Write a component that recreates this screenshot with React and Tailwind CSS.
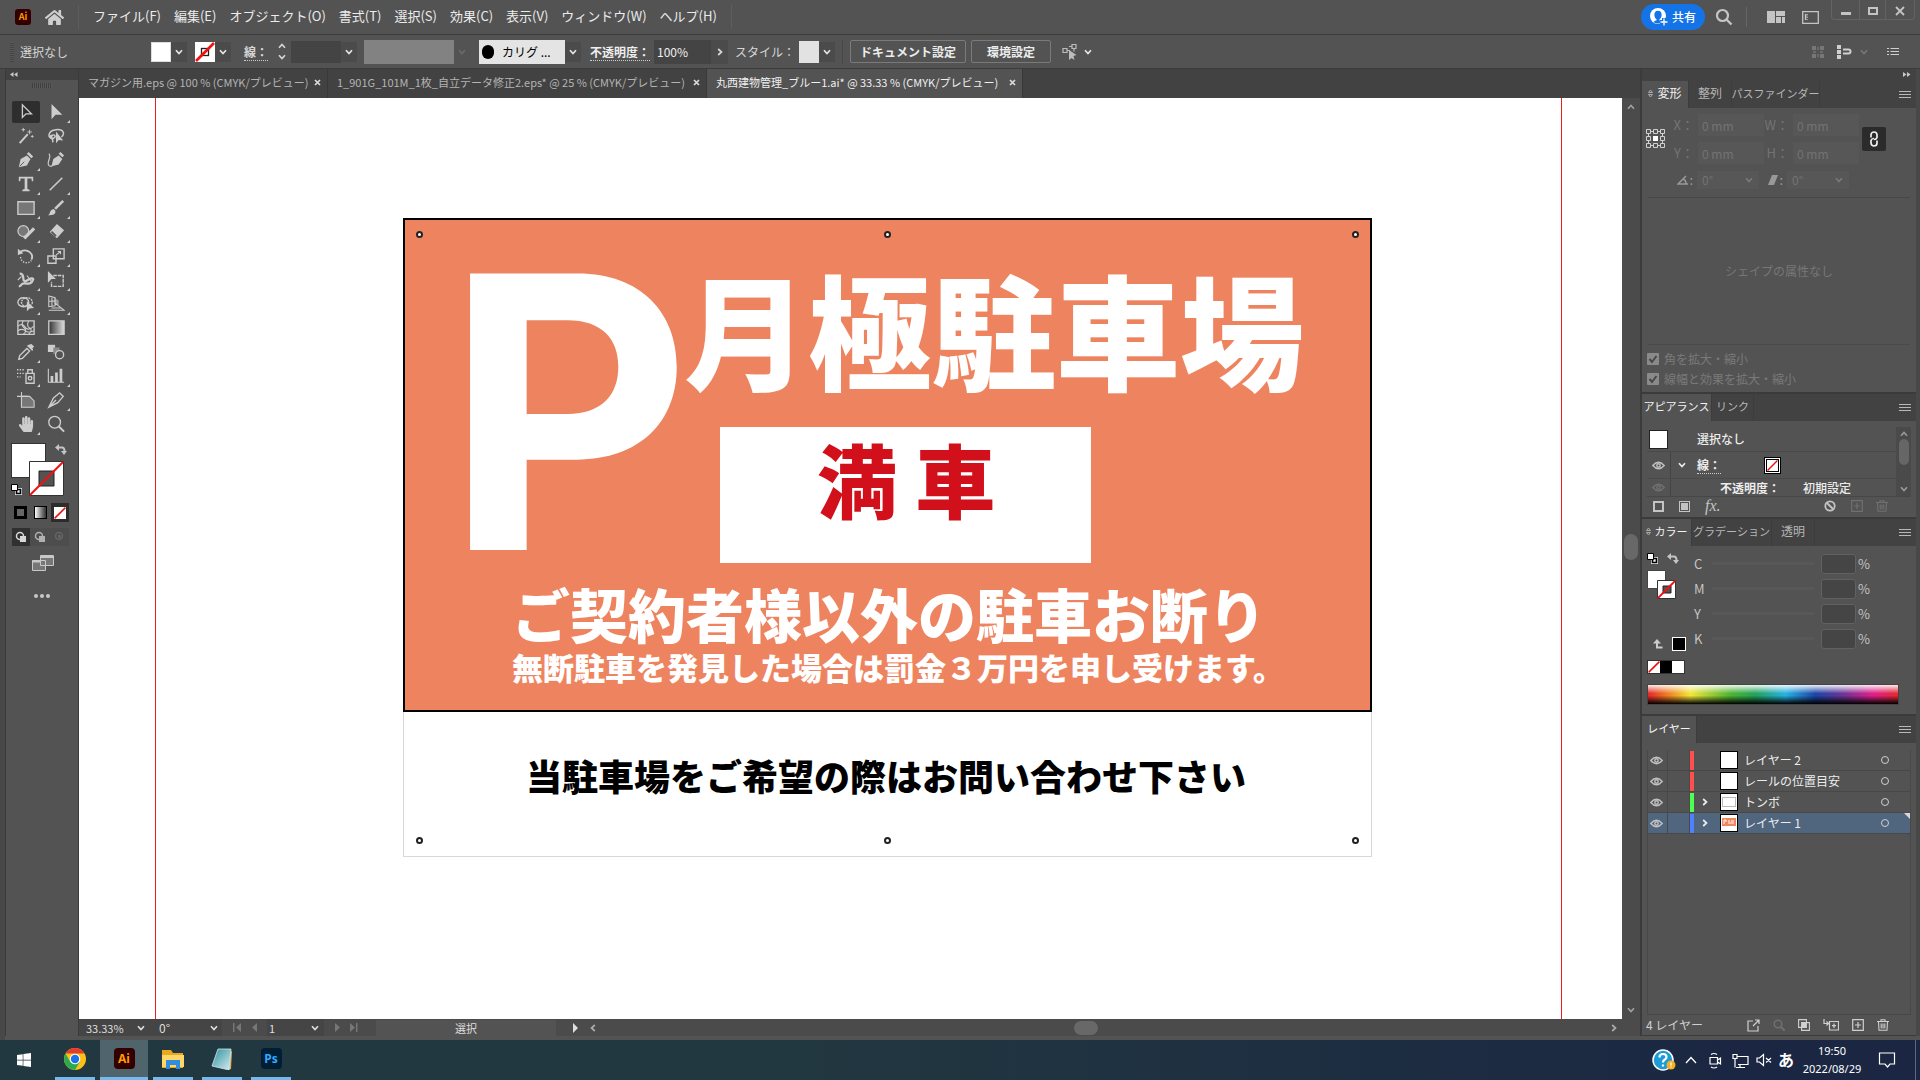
import React from "react";
import { FaHome, FaWindows, FaHandPaper } from "react-icons/fa";

const Icon = ({ size = 20, box = 20, className = "", children }) => (
  <svg
    width={size}
    height={size}
    viewBox={`0 0 ${box} ${box}`}
    className={`shrink-0 ${className}`}
    fill="none"
    stroke="currentColor"
    strokeWidth="1.5"
    aria-hidden="true"
  >
    {children}
  </svg>
);

const Chevron = ({ className = "" }) => (
  <svg width="8" height="6" viewBox="0 0 8 6" fill="none" stroke="currentColor" strokeWidth="1.7" className={`shrink-0 ${className}`} aria-hidden="true">
    <path d="M1 1.2 4 4.5 7 1.2" />
  </svg>
);

const DropButton = ({ label }) => (
  <button aria-label={label} className="flex h-[20px] w-[16px] shrink-0 items-center justify-center bg-[#4b4b4b] text-[#e6e6e6]">
    <Chevron />
  </button>
);

const Hamburger = () => (
  <button aria-label="パネルメニュー" className="mr-[5px] ml-auto flex h-full items-center text-[#b8b8b8]">
    <svg width="12" height="9" viewBox="0 0 12 9" stroke="currentColor" strokeWidth="1" aria-hidden="true">
      <path d="M0 1.5h12M0 4.5h12M0 7.5h12" />
    </svg>
  </button>
);

const menus = ["ファイル(F)", "編集(E)", "オブジェクト(O)", "書式(T)", "選択(S)", "効果(C)", "表示(V)", "ウィンドウ(W)", "ヘルプ(H)"];

function MenuBar() {
  return (
    <header className="flex h-[35px] shrink-0 items-center border-b border-[#3b3b3b] pl-[15px]">
      <span className="flex h-[16px] w-[16px] items-center justify-center rounded-[3px] bg-[#330000] text-[9px] font-bold text-[#ff9a00]">Ai</span>
      <button aria-label="ホーム" className="ml-[14px] text-[#cfcfcf]"><FaHome size={19} /></button>
      <div className="mx-[14px] h-[24px] w-px bg-[#5e5e5e]" />
      <nav className="flex gap-[13px] pb-[2px] text-[13px] text-[#ececec]">
        {menus.map((m) => (
          <button key={m} className="leading-[20px] whitespace-nowrap">{m}</button>
        ))}
      </nav>
      <div className="ml-[14px] h-[24px] w-px bg-[#5e5e5e]" />
      <div className="ml-auto flex h-full items-center text-[#c4c4c4]">
        <button className="flex h-[26px] w-[64px] items-center justify-center gap-[4px] rounded-full bg-[#1473e6] text-[12px] font-medium text-white">
          <svg width="18" height="18" viewBox="0 0 18 18" aria-hidden="true">
            <circle cx="8" cy="8" r="8" fill="#fff" />
            <ellipse cx="8" cy="7" rx="3.6" ry="4.2" fill="#1473e6" />
            <path d="M6.5 10h3v2.6h-3zM3.4 14q4.6-4 9.2 0-4.6 3-9.2 0z" fill="#1473e6" />
            <path d="M14 10v8M10 14h8" stroke="#1473e6" strokeWidth="4" />
            <path d="M14 10.5v7M10.5 14h7" stroke="#fff" strokeWidth="1.3" />
          </svg>
          共有
        </button>
        <button aria-label="検索" className="ml-[10px]">
          <Icon size={18} box={18} className="block"><circle cx="7.5" cy="7.5" r="5.5" strokeWidth="2.2" /><path d="m11.5 11.5 5 5" strokeWidth="2.4" /></Icon>
        </button>
        <div className="ml-[13px] h-[20px] w-px bg-[#666]" />
        <button aria-label="ドキュメントの配置" className="ml-[20px]">
          <svg width="18" height="12" viewBox="0 0 18 12" fill="currentColor" className="block" aria-hidden="true"><path d="M0 0h8v12H0zM9 0h9v5H9zM9 6h5v6H9zM15 6h3v6h-3z" /></svg>
        </button>
        <button aria-label="ワークスペース" className="ml-[17px]">
          <svg width="17" height="13" viewBox="0 0 17 13" fill="none" stroke="currentColor" strokeWidth="1.3" className="block" aria-hidden="true"><path d="M.7.7h15.6v11.6H.7zM3.5 3v6" /><path d="M5 3v6" strokeDasharray="1.5 1" /></svg>
        </button>
        <div className="mr-[5px] ml-[12px] flex h-[20px] self-start rounded-b border border-t-0 border-[#636363]">
          <button aria-label="最小化" className="flex w-[27px] items-center justify-center pt-[8px]"><span className="h-[3px] w-[10px] bg-current" /></button>
          <button aria-label="最大化" className="flex w-[27px] items-center justify-center border-x border-[#636363] pt-[3px]"><span className="h-[8px] w-[10px] border-2 border-current" /></button>
          <button aria-label="閉じる" className="flex w-[28px] items-center justify-center pt-[2px]"><Icon size={10} box={10}><path d="m1 1 8 8M9 1 1 9" strokeWidth="1.8" /></Icon></button>
        </div>
      </div>
    </header>
  );
}

const NoneSwatch = ({ size = 20, inner = true }) => (
  <svg width={size} height={size} viewBox="0 0 20 20" className="shrink-0 bg-white" aria-hidden="true">
    {inner && <rect x="6.5" y="6.5" width="7" height="7" fill="#fff" stroke="#222" strokeWidth="1.3" />}
    <path d="M1 19 19 1" stroke="#f01010" strokeWidth="2.6" />
  </svg>
);

function ControlBar() {
  return (
    <div className="flex h-[34px] shrink-0 items-center overflow-hidden border-b border-[#3b3b3b] pl-[10px] text-[12px] text-[#d6d6d6]">
      <div className="mr-[6px] h-[20px] w-[4px] bg-[repeating-linear-gradient(0deg,#444_0_1px,#585858_1px_2px)]" />
      <span className="w-[131px]">選択なし</span>
      <span className="h-[20px] w-[20px] shrink-0 border border-[#ddd] bg-white" />
      <DropButton label="塗り" />
      <span className="w-[8px] shrink-0" />
      <NoneSwatch />
      <DropButton label="線色" />
      <label htmlFor="stroke-w" className="ml-[13px] w-[30px] font-bold whitespace-nowrap"><span className="border-b border-dotted border-[#ccc]">線：</span></label>
      <button aria-label="線幅を増減" className="flex h-[20px] w-[15px] flex-col items-center justify-center gap-[5px]">
        <Chevron className="rotate-180" /><Chevron />
      </button>
      <input id="stroke-w" className="ml-[2px] h-[22px] w-[50px] bg-[#444]" />
      <DropButton label="線幅" />
      <span className="ml-[7px] h-[24px] w-[90px] shrink-0 bg-[#828282]" />
      <span className="flex w-[16px] justify-center text-[#6b6b6b]"><Chevron /></span>
      <span className="ml-[9px] flex h-[24px] w-[86px] shrink-0 items-center gap-[8px] bg-[#e4e4e4] pl-[3px] text-[12px] whitespace-nowrap text-black">
        <span className="h-[14px] w-[12px] rounded-full bg-black" />カリグ ...
      </span>
      <DropButton label="ブラシ" />
      <label htmlFor="opacity" className="ml-[9px] w-[64px] font-bold whitespace-nowrap text-[#eee]"><span className="border-b border-dotted border-[#ccc]">不透明度：</span></label>
      <input id="opacity" defaultValue="100%" className="h-[24px] w-[57px] bg-[#444] pl-[3px] text-[12px] text-[#f0f0f0]" />
      <button aria-label="不透明度スライダー" className="flex h-[24px] w-[17px] items-center justify-center bg-[#4b4b4b]"><Chevron className="-rotate-90" /></button>
      <span className="ml-[7px] w-[64px] whitespace-nowrap">スタイル：</span>
      <span className="h-[22px] w-[20px] shrink-0 bg-[#e2e2e2]" />
      <DropButton label="スタイル" />
      <span className="mx-[7px] h-[24px] w-px bg-[#474747]" />
      <button className="h-[23px] w-[116px] shrink-0 rounded-[2px] border border-[#7a7a7a] text-[12px] font-bold text-[#ececec]">ドキュメント設定</button>
      <button className="ml-[5px] h-[23px] w-[80px] shrink-0 rounded-[2px] border border-[#7a7a7a] text-[12px] font-bold text-[#ececec]">環境設定</button>
      <button aria-label="選択オプション" className="ml-[10px] flex items-center gap-[5px] text-[#bcbcbc]">
        <Icon size={18} box={18}><path d="M2 5.5h4v4H2zM11 1.5h4v4h-4zM6 7.5h3M13 5.5v3M8 3.5h3" strokeWidth="1.2" /><path d="M8 7v10l2.5-2 3 2-1-4 3-1z" {...{ fill: "currentColor", stroke: "none" }} /></Icon>
        <Chevron className="text-[#e6e6e6]" />
      </button>
      <div className="mr-[21px] ml-auto flex items-center text-[#cfcfcf]">
        <svg width="12" height="12" viewBox="0 0 12 12" fill="#777" aria-hidden="true"><path d="M0 0h4v4H0zM8 0h4v4H8zM0 8h4v4H0zM8 8h4v4H8z" /><path d="M5 1h2v3H5zM5 8h2v3H5zM1 5h3v2H1zM8 5h3v2H8z" fill="#6c6c6c" /></svg>
        <svg width="15" height="14" viewBox="0 0 15 14" fill="none" stroke="currentColor" className="ml-[13px]" aria-hidden="true"><path d="M0 0h4v4H0zM0 5h4v4H0zM0 10h4v4H0z" fill="currentColor" stroke="none" /><path d="M6 4.500h5.500q2 0 2 2t-2 2H6" strokeWidth="2" /></svg>
        <Chevron className="ml-[8px] text-[#777]" />
        <svg width="12" height="9" viewBox="0 0 12 9" stroke="currentColor" strokeWidth="1.2" className="ml-[19px]" aria-hidden="true"><path d="M3.500 1.500H12M3.500 4.500H12M3.500 7.500H12M0 1.500h2M0 4.500h2M0 7.500h2" /></svg>
      </div>
    </div>
  );
}

const F = { fill: "currentColor", stroke: "none" };
const tools = [
  ["選択", <path d="M6 2v14l4-4h6z" />],
  ["ダイレクト選択", <path d="M5 1v17l4.500-5H17z" {...F} />],
  ["自動選択", <><path d="m3 18 9-10" strokeWidth="2.2" /><path d="M14 3v5M11.5 5.5h5M7 1v4M5 3h4M17 9v3M15.5 10.5h3" strokeWidth="1" /></>],
  ["なげなわ", <><path d="M6 13C0 12 1 4 10 3s10 5 6 8M6 13c-3-3 2-6 3-3s-4 2-3 4 0 3 0 3M6 9c-3 0-3 3 0 3" strokeWidth="1.6" /><path d="M10 5v13l3-3.500 5 .5z" {...F} /></>],
  ["ペン", <><path d="m2 18 2-9 7-4 4 4-4 7z" {...F} /><path d="m11 3 2-2 5 5-2 2z" {...F} /><path d="m3 17 5-5" stroke="#535353" strokeWidth="1" /></>],
  ["曲線", <><path d="M2 3c4 3-3 9 0 13 2 2 4 1 5-1" strokeWidth="1.3" /><path d="m5 17 2-8 6-4 4 4-4 6z" {...F} /><path d="m13 3 2-2 4 4-2 2z" {...F} /></>],
  ["文字", <path d="M2 2h16v5h-1.500L16 4h-4.500v11.500l2.500.8V18H6v-1.700l2.500-.8V4H4l-.5 3H2z" {...F} />],
  ["直線", <path d="M3 17 17 3" strokeWidth="1.7" />],
  ["長方形", <path d="M1 3h18v14H1z" fill="#777" />],
  ["ブラシ", <><path d="m8 10 9-9 2 2-9 9z" {...F} /><path d="M7 11c3 1 3 4 1 6-2 1-4 1-7 1 3-1 1-5 6-7z" {...F} /></>],
  ["Shaper", <><circle cx="7" cy="9" r="6" fill="#777" strokeWidth="1.3" /><path d="m8 17 11-11" strokeWidth="3.5" /></>],
  ["消しゴム", <><path d="m11 1 8 7-8 9-8-7z" {...F} /><path d="m5 9.500 5 5" strokeWidth="2" stroke="#535353" /></>],
  ["回転", <><path d="M4 5c8-4 15 3 12 9" strokeWidth="2" /><path d="M1 2v7l6-2z" {...F} /><path d="M4 11c0 6 8 9 12 4" strokeDasharray="1.5 1.5" /></>],
  ["拡大・縮小", <><path d="M7 2h12v11H7zM1 10h9v8H1z" /><path d="m10 9 5-4M12 5h3v3" strokeWidth="1.2" /></>],
  ["線幅", <><path d="M3 3q4 0 4 5t5 2 6-1q-2 6-7 5T5 15t-3 2" strokeWidth="2.5" /><path d="M5 6 1 10M11 5l6 8" strokeWidth="1.2" /></>],
  ["自由変形", <><path d="M7 5h11v12H5V12" strokeDasharray="4 1" /><path d="M1 0v13l4-4h5z" {...F} /></>],
  ["シェイプ形成", <><ellipse cx="7" cy="8" rx="6" ry="5" /><ellipse cx="11" cy="8" rx="6" ry="5" fill="none" strokeDasharray="2 1" /><path d="M11 7v11l3-3 5-.5z" {...F} /></>],
  ["遠近グリッド", <><path d="M8 3l5 3v5l-5-1z" fill="#999" stroke="none" /><path d="M2 1v12l7-1V3zM2 7l7-.500M5.500 2v10M2 17h17L9 9M5 14.500h10" strokeWidth="1.200" /></>],
  ["メッシュ", <><path d="M1 2h18v15H1z" /><path d="M1 8q5-4 8 1t10-1M1 13q5-3 8 0t10 0M7 2q-3 5 1 8t-1 7M13 2q-3 6 1 8t-1 7" strokeWidth="1.2" /></>],
  ["グラデーション", <><defs><linearGradient id="tg"><stop stopColor="#333" /><stop offset="1" stopColor="#ddd" /></linearGradient></defs><path d="M2 2h17v15H2z" fill="url(#tg)" /></>],
  ["スポイト", <><path d="m2 18 1-4 8-8 3 3-8 8z" /><path d="m11 3 6 6 1-2-1-1 2-2-3-3-3 1z" {...F} /></>],
  ["ブレンド", <><path d="M1 2h8v8H1z" {...F} /><path d="M7 5h7v7H7z" fill="#8a8a8a" stroke="none" /><circle cx="14" cy="13" r="4.5" fill="#535353" /></>],
  ["スプレー", <><path d="M10 7h9v11h-9zM12 7V3h5v4" /><circle cx="14.5" cy="12.5" r="2" /><path d="M0 3h8M0 7h8M0 11h4" strokeDasharray="1.5 1.5" /></>],
  ["グラフ", <><path d="M1.5 2v15H19" strokeWidth="1.2" /><path d="M4 10h3v7H4zM9 6h3v11H9zM14 2h3v15h-3z" {...F} /></>],
  ["アートボード", <><path d="M5 6h9l5 5v7H5z" fill="#777" strokeWidth="1.200" /><path d="M5 1v17M0 6h12" strokeWidth="1.200" /></>],
  ["スライス", <path d="m2 18 5-10 7-6 4 4-6 7zM2 18l8-8" />],
  ["手のひら", <FaHandPaper x="1" y="1" size={18} stroke="none" />],
  ["ズーム", <><circle cx="8.500" cy="8" r="6.500" /><path d="m13 12.500 6 6" strokeWidth="2.200" /></>],
];
const noCorner = new Set([0, 2, 3, 5, 18, 19, 21, 24, 27]);

const SwapIcon = () => (
  <svg width="12" height="11" viewBox="0 0 12 11" aria-hidden="true" className="shrink-0">
    <path d="M3 3.500h4q2.500 0 2.500 4" fill="none" stroke="#c4c4c4" strokeWidth="2" />
    <path d="M0 3.500 4 0v7zM6 7h6l-3 4z" fill="#c4c4c4" />
  </svg>
);
const DefaultIcon = () => (
  <svg width="11" height="11" viewBox="0 0 11 11" aria-hidden="true" className="shrink-0">
    <path d="M4 4h7v7H4z" fill="#eee" /><path d="M5.5 5.5h4v4h-4z" fill="none" stroke="#000" strokeWidth="1.6" />
    <path d="M.5.5h6v6h-6z" fill="#fff" stroke="#000" />
  </svg>
);

function ToolPanel() {
  return (
    <aside className="flex w-[74px] shrink-0 flex-col border-x border-[#3b3b3b]">
      <div className="h-[11px] shrink-0 bg-[#424242] pl-[4px]">
        <svg width="8" height="9" viewBox="0 0 8 9" fill="#c8c8c8" aria-hidden="true"><path d="M3.500 3v5L0 5.500zM7.500 3v5L4 5.500z" /></svg>
      </div>
      <div className="mx-auto mt-[3px] h-[5px] w-[20px] shrink-0 bg-[repeating-linear-gradient(90deg,#3f3f3f_0_1px,#5a5a5a_1px_2px)]" />
      <div className="mt-[12px] ml-[6px] grid grid-cols-[30px_30px] text-[#cdcdcd]">
        {tools.map(([name, art], i) => (
          <button key={name} aria-label={name} className="relative flex h-[24px] items-center">
            <span className={i === 0 ? "flex h-[22px] w-[28px] items-center justify-center rounded-[2px] bg-[#2e2e2e]" : "flex w-[28px] items-center justify-center"}>
              <Icon size={18}>{art}</Icon>
            </span>
            {!noCorner.has(i) && (
              <svg width="3" height="3" viewBox="0 0 3 3" className="absolute right-[2px] bottom-[1px]" aria-hidden="true"><path d="M3 0v3H0z" fill="#d0d0d0" /></svg>
            )}
          </button>
        ))}
      </div>
      <div className="relative mt-[7px] ml-[5px] h-[53px] w-[58px] shrink-0">
        <span className="absolute top-0 left-0 h-[35px] w-[35px] border border-[#333] bg-white" />
        <svg width="35" height="35" viewBox="0 0 35 35" className="absolute top-[18px] left-[18px]" aria-hidden="true">
          <path d="M.5.5h34v34H.5z" fill="#fff" stroke="#333" /><path d="M10 10h15v15H10z" fill="#535353" stroke="#222" /><path d="M1 34 34 1" stroke="#f01010" strokeWidth="2" />
        </svg>
        <button aria-label="塗りと線を入れ替え" className="absolute top-[1px] right-[2px]"><SwapIcon /></button>
        <button aria-label="初期設定の塗りと線" className="absolute top-[41px] left-0"><DefaultIcon /></button>
      </div>
      <div className="mt-[7px] ml-[6px] flex h-[19px] w-[58px] shrink-0 items-center">
        <button aria-label="カラー" className="ml-[2px] h-[13px] w-[13px] border-[3px] border-black bg-[#666]" />
        <button aria-label="グラデーション適用" className="ml-[7px] h-[13px] w-[13px] border border-black bg-linear-to-r from-white to-[#333]" />
        <button aria-label="なし" className="ml-[4px] flex h-[19px] w-[18px] items-center justify-center bg-[#2c2c2c]"><NoneSwatch size={12} inner={false} /></button>
      </div>
      <div className="mt-[6px] ml-[6px] flex h-[18px] w-[57px] shrink-0 bg-[#4d4d4d] text-[#b0b0b0]">
        {["標準描画", "背面描画", "内側描画"].map((n, i) => (
          <button key={n} aria-label={n} className={i === 0 ? "flex w-[18px] items-center justify-center bg-[#303030] text-[#d8d8d8]" : i === 1 ? "flex w-[20px] items-center justify-center" : "flex w-[19px] items-center justify-center text-[#646464]"}>
            <Icon size={12} box={12}><circle cx="5" cy="5" r="3.5" />{i < 2 ? <path d="M5 5h6v6H5z" {...F} /> : <path d="M4 4h3v3H4z" {...F} />}</Icon>
          </button>
        ))}
      </div>
      <button aria-label="スクリーンモード" className="mr-[24px] ml-auto mt-[9px] text-[#c8c8c8]">
        <svg width="22" height="17" viewBox="0 0 22 17" fill="#777" stroke="currentColor" className="block" aria-hidden="true"><path d="M.5 5.500h13v10H.5zM8.500.5h13v10h-13z" /><path d="M0 6.500h8M8 2h14" strokeWidth="2" /></svg>
      </button>
      <button aria-label="ツールバーを編集" className="mr-[28px] ml-auto mt-[22px] flex gap-[2px]">
        {[0, 1, 2].map((d) => <span key={d} className="h-[4px] w-[4px] rounded-full bg-[#c8c8c8]" />)}
      </button>
    </aside>
  );
}

const docs = [
  ["マガジン用.eps @ 100 % (CMYK/プレビュー)", "w-[249px]"],
  ["1_901G_101M_1枚_自立データ修正2.eps* @ 25 % (CMYK/プレビュー)", "w-[379px]"],
  ["丸西建物管理_ブルー1.ai* @ 33.33 % (CMYK/プレビュー)", "w-[316px]"],
];

function DocTabs() {
  return (
    <div className="flex h-[29px] shrink-0 overflow-hidden bg-[#424242] text-[11px]">
      {docs.map(([t, w], i) => (
        <div key={t} className={`${w} flex shrink-0 items-center justify-between border-r border-[#383838] pr-[6px] pb-[2px] pl-[9px] whitespace-nowrap ${i === 2 ? "bg-[#535353] text-[#f0f0f0]" : "text-[#b4b4b4]"}`}>
          <button>{t}</button>
          <button aria-label="閉じる"><Icon size={7} box={7} className="block text-[#dcdcdc]"><path d="m1 1 5 5M6 1 1 6" strokeWidth="1.7" /></Icon></button>
        </div>
      ))}
    </div>
  );
}

const holes = ["top-[13px] left-[13px]", "top-[13px] left-[481px]", "top-[13px] left-[949px]", "top-[619px] left-[13px]", "top-[619px] left-[481px]", "top-[619px] left-[949px]"];

function Canvas() {
  return (
    <main className="relative min-w-0 flex-1 overflow-hidden bg-white">
      <div className="absolute inset-y-0 left-[76px] w-px bg-[#ee1c1c]" />
      <div className="absolute inset-y-0 left-[1482px] w-px bg-[#ee1c1c]" />
      <div className="absolute top-[120px] left-[324px] h-[639px] w-[969px] border border-[#d8d8d8]" />
      <section className="absolute top-[120px] left-[324px] h-[639px] w-[969px] font-black whitespace-nowrap text-white">
        <div className="absolute inset-x-0 top-0 h-[494px] border-2 border-black bg-[#ee845f]" />
        <div className="absolute top-[209px] left-[317px] h-[136px] w-[371px] bg-white" />
        <span className="absolute top-[9px] left-[42px] font-['Inter','Liberation_Sans',sans-serif] text-[380px] leading-[370px] font-bold">P</span>
        <span className="absolute top-[41px] left-[281px] text-[124px] leading-[136px]">月極駐車場</span>
        <span className="absolute top-[214px] left-[414px] text-[80px] leading-[90px] text-[#d2101c]">満 車</span>
        <span className="absolute top-[363px] left-[109px] text-[58px] leading-[64px]">ご契約者様以外の駐車お断り</span>
        <span className="absolute top-[432px] left-[109px] text-[31px] leading-[34px]">無断駐車を発見した場合は罰金３万円を申し受けます。</span>
        <span className="absolute top-[537px] left-[123px] text-[36px] leading-[40px] text-black">当駐車場をご希望の際はお問い合わせ下さい</span>
        {holes.map((h) => <span key={h} className={`${h} absolute h-[7px] w-[7px] rounded-full border-2 border-[#222] bg-white`} />)}
      </section>
    </main>
  );
}

function StatusBar() {
  const dim = "text-[#777]";
  return (
    <div className="flex h-[17px] shrink-0 items-center bg-[#4b4b4b] text-[11px] leading-[16px] text-[#dedede]">
      <button className="flex h-full w-[73px] items-center justify-between bg-[#454545] pr-[7px] pl-[7px]">33.33%<Chevron /></button>
      <button className="flex h-full w-[70px] items-center justify-between bg-[#454545] pr-[4px] pl-[7px] text-[12px]">0°<Chevron /></button>
      <svg width="30" height="9" viewBox="0 0 30 9" fill="currentColor" className={`ml-[11px] ${dim}`} aria-hidden="true"><path d="M0 0h1.500v9H0zM8 0v9L3 4.500zM24 0v9l-5-4.500z" /></svg>
      <button className="ml-[4px] flex h-full w-[57px] items-center justify-between bg-[#454545] pr-[5px] pl-[2px]">1<Chevron /></button>
      <svg width="26" height="9" viewBox="0 0 26 9" fill="currentColor" className={`ml-[9px] ${dim}`} aria-hidden="true"><path d="M2 0v9l5-4.500zM17 0v9l5-4.500zM23 0h1.500v9H23z" /></svg>
      <span className="ml-[17px] w-[180px] bg-[#535353] text-center">選択</span>
      <svg width="6" height="10" viewBox="0 0 6 10" fill="currentColor" className="ml-[17px]" aria-hidden="true"><path d="M0 0v10l5-5z" /></svg>
      <Chevron className="ml-[10px] rotate-90 text-[#aaa]" />
      <div className="flex flex-1 justify-center pr-[36px]"><span className="h-[14px] w-[24px] rounded-full bg-[#686868]" /></div>
      <Chevron className="mr-[6px] -rotate-90 text-[#aaa]" />
      <span className="w-[16px]" />
    </div>
  );
}

const Tabs = ({ items, spin }) => (
  <div className="flex h-[27px] shrink-0 items-center bg-[#424242] text-[12px]">
    {items.map(([t, w], i) => (
      <button key={t} className={`${w} flex h-full shrink-0 items-center justify-center gap-[4px] border-r border-[#3c3c3c] pb-[3px] whitespace-nowrap ${i === 0 ? "bg-[#535353] text-[#f2f2f2]" : "text-[#b6b6b6]"}`}>
        {i === 0 && spin && <svg width="5" height="9" viewBox="0 0 5 9" fill="none" stroke="#aaa" aria-hidden="true"><path d="M.5 3.500 2.500 1l2 2.500zM.5 5.500l2 2.500 2-2.500z" /></svg>}
        {t}
      </button>
    ))}
    <Hamburger />
  </div>
);

const Field = ({ id, label, value }) => (
  <>
    <label htmlFor={id} className="w-[25px] shrink-0 text-right whitespace-nowrap">{label}</label>
    <input id={id} defaultValue={value} disabled className="ml-[4px] h-[22px] w-[66px] bg-[#575757] pl-[4px] text-[12px]" />
  </>
);

const AngleSelect = ({ id, label, children }) => (
  <>
    <label htmlFor={id} aria-label={label} className="flex w-[24px] items-center justify-end text-[#999]"><Icon size={12} box={12}>{children}</Icon>:</label>
    <div className="ml-[4px] flex items-center bg-[#575757] pr-[6px]">
      <select id={id} disabled className="w-[48px] appearance-none pl-[5px] text-[12px]"><option>0°</option></select>
      <Chevron className="text-[#7a7a7a]" />
    </div>
  </>
);

function TransformPanel() {
  return (
    <section className="flex h-[313px] shrink-0 flex-col border-b-2 border-[#3b3b3b]">
      <Tabs spin items={[["変形", "w-[47px]"], ["整列", "w-[43px]"], ["パスファインダー", "w-[88px] text-[11px]"]]} />
      <div className="flex pt-[6px] pl-[4px] text-[13px] text-[#737373]">
        <svg width="19" height="19" viewBox="0 0 19 19" fill="none" stroke="#d0d0d0" className="mt-[15px] shrink-0" aria-hidden="true">
          <path d="M.5.5h4v4h-4zM7.5.5h4v4h-4zM14.5.5h4v4h-4zM.5 7.5h4v4h-4zM14.5 7.5h4v4h-4zM.5 14.5h4v4h-4zM7.5 14.5h4v4h-4zM14.5 14.5h4v4h-4zM5 2.5h2M12 2.5h2M5 16.5h2M12 16.5h2M2.5 5v2M2.5 12v2M16.5 5v2M16.5 12v2" /><path d="M7 7h5v5H7z" fill="#fff" stroke="none" />
        </svg>
        <div className="ml-[4px] flex flex-col gap-[6px]">
          <div className="flex items-center">
            <Field id="tx" label="X：" value="0 mm" /><Field id="tw" label="W：" value="0 mm" />
          </div>
          <div className="flex items-center">
            <Field id="ty" label="Y：" value="0 mm" /><Field id="th" label="H：" value="0 mm" />
          </div>
          <div className="flex items-center">
            <AngleSelect id="ta" label="回転"><path d="M11 10H1l8-8M6 5q3 1 3 5" /></AngleSelect>
            <AngleSelect id="ts" label="シアー"><path d="M5 1h6L7 11H1z" {...F} /></AngleSelect>
          </div>
        </div>
        <button aria-label="縦横比を固定" className="mt-[13px] ml-[3px] flex h-[24px] w-[24px] shrink-0 items-center justify-center rounded-[2px] bg-[#2b2b2b] text-[#eee]">
          <Icon size={18} box={18}><path d="M6 7.500V5a3 3 0 0 1 6 0v2.500a3 3 0 0 1-3 2M12 10.500V13a3 3 0 0 1-6 0v-2.500a3 3 0 0 1 3-2" strokeWidth="1.700" /></Icon>
        </button>
      </div>
      <div className="mx-[6px] mt-[7px] h-px shrink-0 bg-[#484848]" />
      <div className="flex flex-1 items-center justify-center text-[12px] text-[#777]">シェイプの属性なし</div>
      <div className="mx-[6px] mb-[4px] h-px shrink-0 bg-[#4a4a4a]" />
      {["角を拡大・縮小", "線幅と効果を拡大・縮小"].map((t) => (
        <label key={t} className="flex h-[20px] shrink-0 items-center gap-[5px] pl-[5px] text-[12px] text-[#7a7a7a]">
          <span className="relative flex h-[12px] w-[12px]">
            <input type="checkbox" defaultChecked disabled className="h-[12px] w-[12px] appearance-none rounded-[1px] bg-[#8a8a8a]" />
            <Icon size={12} box={12} className="absolute top-0 left-0 text-[#484848]"><path d="m2.500 6 2.500 3 4.500-6" strokeWidth="2" /></Icon>
          </span>
          {t}
        </label>
      ))}
      <div className="h-[3px] shrink-0" />
    </section>
  );
}

const Eye = ({ dim }) => (
  <svg width="13" height="9" viewBox="0 0 13 9" fill="none" stroke={dim ? "#707070" : "#c0c0c0"} strokeWidth="1.4" aria-hidden="true" className="shrink-0">
    <path d="M.8 4.500Q6.500-2 12.200 4.500 6.500 11 .8 4.500z" /><circle cx="6.500" cy="4.500" r="1.700" />
  </svg>
);
const Plus = ({ className = "" }) => <Icon size={12} box={12} className={className}><path d="M.7.7h10.6v10.6H.7zM6 3v6M3 6h6" strokeWidth="1.2" /></Icon>;
const Trash = ({ className = "" }) => <Icon size={12} box={12} className={className}><path d="M0 2.500h12M4 2V.7h4V2M1.500 3l.5 8.300h8l.5-8.300M4.200 4.500v5M6 4.500v5M7.800 4.500v5" strokeWidth="1.1" /></Icon>;

function AppearancePanel() {
  return (
    <section className="flex h-[125px] shrink-0 flex-col border-b-2 border-[#3b3b3b] text-[12px] text-[#ececec]">
      <Tabs items={[["アピアランス", "w-[70px] text-[11px]"], ["リンク", "w-[42px] text-[11px]"]]} />
      <div className="mx-[5px] mt-[6px] flex h-[70px] shrink-0 border-b border-[#474747]">
        <div className="flex-1">
          <div className="flex h-[25px] items-center border-b border-[#4a4a4a]"><span className="ml-[2px] h-[19px] w-[19px] border border-[#222] bg-white" /><span className="ml-[29px] font-medium">選択なし</span></div>
          <div className="flex h-[27px] items-center border-b border-[#4a4a4a]">
            <span className="flex h-full w-[24px] items-center justify-center border-r border-[#444]"><Eye /></span>
            <button aria-label="線を展開" className="ml-[7px]"><Chevron /></button>
            <span className="ml-[11px] w-[67px] font-bold"><span className="border-b border-dotted border-[#ccc]">線：</span></span>
            <span className="flex border border-black bg-white p-[1px]"><span className="flex border border-black"><NoneSwatch size={11} inner={false} /></span></span>
          </div>
          <div className="flex h-[17px] items-center leading-[17px]"><span className="flex h-full w-[24px] items-center justify-center border-r border-[#444]"><Eye dim /></span><span className="ml-[49px] w-[83px] font-bold">不透明度：</span><span className="font-medium">初期設定</span></div>
        </div>
        <div className="flex w-[15px] flex-col items-center bg-[#4a4a4a] py-[4px] text-[#999]"><Chevron className="rotate-180" /><span className="mt-[2px] h-[26px] w-[10px] rounded-full bg-[#666]" /><Chevron className="mt-auto" /></div>
      </div>
      <div className="flex flex-1 items-center pb-[2px] pl-[11px] text-[#c4c4c4]">
        <span className="h-[11px] w-[11px] border-2 border-current" />
        <span className="ml-[15px] h-[11px] w-[11px] border border-current p-[1px]"><span className="block h-full bg-current" /></span>
        <span className="ml-[15px] font-['Liberation_Serif',serif] text-[16px] leading-[18px] italic">fx.</span>
        <Icon size={12} box={12} className="mr-[15px] ml-auto"><circle cx="6" cy="6" r="4.7" strokeWidth="1.8" /><path d="m3 3 6 6" strokeWidth="1.8" /></Icon>
        <Plus className="mr-[13px] text-[#707070]" /><Trash className="mr-[28px] text-[#707070]" />
      </div>
    </section>
  );
}

function ColorPanel() {
  return (
    <section className="flex h-[197px] shrink-0 flex-col border-b-2 border-[#3b3b3b]">
      <Tabs spin items={[["カラー", "w-[50px] text-[11px]"], ["グラデーション", "w-[80px] text-[11px]"], ["透明", "w-[43px]"]]} />
      <div className="flex px-[5px] pt-[5px]">
        <div className="flex w-[47px] flex-col pt-[2px]">
          <div className="flex items-center gap-[9px]"><DefaultIcon /><SwapIcon /></div>
          <svg width="30" height="30" viewBox="0 0 30 30" className="mt-[6px]" aria-hidden="true"><path d="M.5.5h18v18H.5z" fill="#fff" stroke="#444" /><path d="M10.500 10.500h18v18h-18z" fill="#fff" stroke="#333" /><path d="M16 16h8v7h-8z" fill="#535353" stroke="#222" /><path d="m11 28 17-17" stroke="#f01010" strokeWidth="1.8" /></svg>
          <div className="mt-[37px] ml-[6px] flex items-center gap-[9px]">
            <Icon size={10} box={10} className="text-[#ccc]"><path d="M9.500 8.500H4V4" strokeWidth="2" /><path d="M0 4.500h8L4 0z" {...F} /></Icon>
            <span className="h-[14px] w-[14px] border border-white bg-black" />
          </div>
          <div className="mt-[9px] flex w-[38px] border border-[#333]"><NoneSwatch size={12} inner={false} /><span className="w-[12px] bg-black" /><span className="w-[12px] bg-white" /></div>
        </div>
        <div className="flex flex-1 flex-col">
          {["C", "M", "Y", "K"].map((c) => (
            <label key={c} className="flex h-[25px] items-center text-[13px] text-[#c4c4c4]">
              <span className="w-[17px]">{c}</span>
              <span className="h-[3px] w-[104px] rounded bg-[#585858]" />
              <input className="mr-[2px] ml-[6px] h-[20px] w-[35px] rounded-[3px] border border-[#616161] bg-[#454545]" />%
            </label>
          ))}
        </div>
      </div>
      <div className="mt-[10px] mr-[17px] ml-[5px] h-[21px] border border-[#444] bg-[linear-gradient(180deg,rgba(255,255,255,.9)_0%,rgba(255,255,255,0)_45%,rgba(0,0,0,0)_55%,#000_100%),linear-gradient(90deg,#e5262b_0%,#f08a24_9%,#f2e63a_17%,#4db531_33%,#22a25a_43%,#27b2e2_55%,#1c45a8_67%,#6a3597_78%,#e0208a_90%,#e42930_100%)]" />
    </section>
  );
}

const layers = [
  ["レイヤー 2", "bg-[#ff4f4f]"],
  ["レールの位置目安", "bg-[#ff4f4f]"],
  ["トンボ", "bg-[#4fff4f]"],
  ["レイヤー 1", "bg-[#4f80ff]"],
];

function LayersPanel() {
  return (
    <section className="flex min-h-0 flex-1 flex-col">
      <Tabs items={[["レイヤー", "w-[55px] text-[11px]"]]} />
      <div className="mx-[5px] mt-[7px] flex-1 border-x border-b border-[#484848] text-[12px] text-[#ececec]">
        {layers.map(([n, c], i) => (
          <div key={n} className={`relative flex h-[21px] items-center border-b border-[#484848] ${i === 3 ? "bg-[#50667f]" : ""}`}>
            <button aria-label="表示切替" className="flex h-full w-[20px] items-center justify-center border-r border-[#494949] pr-[2px]"><Eye /></button>
            <span className="h-full w-[22px] border-r border-[#494949]" />
            <span className={`h-[19px] w-[4px] ${c}`} />
            <span className="flex w-[26px] justify-center pr-[4px]">{i > 1 && <Chevron className="-rotate-90" />}</span>
            <span className="flex h-[18px] w-[18px] items-center justify-center border border-black bg-white">
              {i === 2 && <span className="h-[10px] w-[14px] border border-[#bbb]" />}
              {i === 3 && <svg width="14" height="10" viewBox="0 0 14 10" aria-hidden="true"><path d="M0 0h14v8H0z" fill="#f08560" /><path d="M2 2v4M2 2h2v2M6 3h2M9 3h3M6 5h6" stroke="#fff" fill="none" /></svg>}
            </span>
            <span className="ml-[6px] flex-1 whitespace-nowrap">{n}</span>
            <span className="mr-[21px] h-[8px] w-[8px] rounded-full border border-[#d0d0d0]" />
            {i === 3 && <svg width="6" height="6" viewBox="0 0 6 6" className="absolute top-0 right-0" aria-hidden="true"><path d="M0 0h6v6z" fill="#d8d8d8" /></svg>}
          </div>
        ))}
      </div>
      <div className="flex h-[21px] shrink-0 items-center border-b border-[#3b3b3b] pl-[4px] text-[12px] text-[#d0d0d0]">
        <span>4 レイヤー</span>
        <div className="mr-[27px] ml-auto flex items-center gap-[13px]">
          <Icon size={13} box={13}><path d="M6 2H1v10h10V7M8 1h4v4M12 1 6 7" strokeWidth="1.2" /></Icon>
          <Icon size={12} box={12} className="text-[#707070]"><circle cx="5" cy="5" r="3.8" /><path d="m8 8 4 4" strokeWidth="2" /></Icon>
          <Icon size={12} box={12}><path d="M.6.6h7.8v7.8H.6zM3.600 3.600h7.800v7.800H3.600z" strokeWidth="1.1" /><path d="M4 4h4v4H4z" {...F} /></Icon>
          <svg width="16" height="12" viewBox="0 0 16 12" fill="none" stroke="currentColor" strokeWidth="1.2" aria-hidden="true"><path d="M6.500 2.500h9v8.500h-9zM11 4.500v4.500M9 6.700h4M1 0v4.500h4M3.500 2.500 5.500 4.500l-2 2" /></svg>
          <Plus /><Trash />
        </div>
      </div>
    </section>
  );
}

const AppTile = ({ children, active, label, className = "" }) => (
  <button aria-label={label} className={`flex h-full items-center justify-center ${active ? "w-[48px] bg-[#50646c]" : "w-[40px]"} border-b-[3px] border-[#76b9ed] ${className}`}>{children}</button>
);

function Taskbar() {
  return (
    <footer className="flex h-[40px] shrink-0 items-center bg-linear-to-r from-[#223840] from-40% to-[#1b2742] to-90% font-['Noto_Sans','Noto_Sans_CJK_JP',sans-serif] text-white">
      <button aria-label="スタート" className="flex w-[48px] justify-center"><FaWindows size={16} /></button>
      <AppTile label="Chrome" className="ml-[7px]">
        <svg width="22" height="22" viewBox="0 0 22 22" aria-hidden="true">
          <circle cx="11" cy="11" r="11" fill="#fbc116" /><path d="M1.500 5.500a11 11 0 0 1 19 0H11z" fill="#e33b2e" /><path d="M1.500 5.500A11 11 0 0 0 11 22l4.800-8.300L6.200 13.700z" fill="#2da94f" />
          <circle cx="11" cy="11" r="5.300" fill="#fff" /><circle cx="11" cy="11" r="4.200" fill="#1a73e8" />
        </svg>
      </AppTile>
      <AppTile active className="ml-[5px]"><span className="flex h-[21px] w-[21px] items-center justify-center rounded-[4px] bg-[#330000] text-[12px] font-bold text-[#ff9a00]">Ai</span></AppTile>
      <AppTile label="エクスプローラー" className="ml-[5px]">
        <svg width="22" height="20" viewBox="0 0 22 20" aria-hidden="true"><path d="M0 1h9l2 3h10v15H0z" fill="#e8a921" /><path d="M0 6h22v12H0z" fill="#ffd766" /><path d="M4 11h14v9h-4v-4H8v4H4z" fill="#2f8de0" /></svg>
      </AppTile>
      <AppTile label="メモ帳" className="ml-[9px]">
        <svg width="22" height="22" viewBox="0 0 22 22" aria-hidden="true"><defs><linearGradient id="np" x1="0" y1="0" x2="1" y2="1"><stop stopColor="#2c8f9e" /><stop offset="1" stopColor="#d6eef2" /></linearGradient></defs><path d="m19 4 2-1-1 18-3 1z" fill="#d9b15a" /><path d="M7 1h13l-2 21L1 18z" fill="url(#np)" stroke="#cfe6ea" strokeWidth=".8" /></svg>
      </AppTile>
      <AppTile className="ml-[9px]"><span className="flex h-[21px] w-[21px] items-center justify-center rounded-[4px] bg-[#001e36] text-[12px] font-bold text-[#31a8ff]">Ps</span></AppTile>
      <div className="ml-auto flex h-full items-center">
        <svg width="24" height="22" viewBox="0 0 24 22" aria-hidden="true"><circle cx="11" cy="11" r="10" fill="#1d9bd7" stroke="#fff" strokeWidth="1.5" /><path d="M7.500 8.500q0-3.500 3.500-3.500t3.500 3q0 1.700-2 2.800-1.500.8-1.500 2.700M11 15.500v2" fill="none" stroke="#fff" strokeWidth="2.200" /><circle cx="19" cy="16" r="4.500" fill="#f5b021" /><path d="M19 13.500v3M19 17.500v1" stroke="#fff" strokeWidth="1.3" /></svg>
        <svg width="12" height="8" viewBox="0 0 12 8" fill="none" stroke="#fff" strokeWidth="1.3" className="ml-[9px]" aria-hidden="true"><path d="m1 7 5-5.500L11 7" /></svg>
        <Icon size={17} box={17} className="ml-[10px]"><path d="M3 5.500h7.500v6.500H3zM10.500 8l3-2v6l-3-2M4 2.500q3-2 6 0M4 15q3 2 6 0" strokeWidth="1.2" /></Icon>
        <Icon size={17} box={17} className="ml-[8px]"><path d="M5 4.500h11v8H6M8 12.500v3M4 15.500h9M1 2.500h4v4H1zM3 6.500v9" strokeWidth="1.2" /></Icon>
        <Icon size={16} box={16} className="ml-[7px]"><path d="M1 6h2.500L7.500 2.500v11L3.500 10H1zM10 6l5 4.500M15 6l-5 4.500" strokeWidth="1.2" /></Icon>
        <span className="ml-[6px] text-[16px] leading-[20px] font-bold">あ</span>
        <button className="ml-[7px] flex w-[62px] flex-col items-center text-[11px] leading-[18px]"><span>19:50</span><span>2022/08/29</span></button>
        <button aria-label="通知" className="ml-[15px]"><Icon size={18} box={18} className="block"><path d="M1.500 2h15v11H12l-2.500 3L7 13H1.500z" strokeWidth="1.2" /></Icon></button>
        <div className="ml-[19px] h-full w-px bg-[#60697c]" />
        <div className="w-[4px]" />
      </div>
    </footer>
  );
}

export default function App() {
  return (
    <div className="flex h-screen min-w-0 flex-col overflow-hidden bg-[#535353] font-['Noto_Sans_CJK_JP',sans-serif]">
      <MenuBar />
      <ControlBar />
      <div className="flex min-h-0 flex-1 border-l-[5px] border-[#484848] pb-[4px]">
        <ToolPanel />
        <div className="flex min-w-0 flex-1 flex-col">
          <DocTabs />
          <div className="flex min-h-0 flex-1">
            <Canvas />
            <div className="flex w-[18px] shrink-0 flex-col items-center bg-[#4b4b4b] py-[6px] text-[#a0a0a0]">
              <Chevron className="rotate-180" />
              <div className="flex flex-1 items-center pb-[24px]"><span className="h-[26px] w-[14px] rounded-full bg-[#686868]" /></div>
              <Chevron />
            </div>
          </div>
          <StatusBar />
        </div>
        <aside className="flex w-[280px] shrink-0 flex-col border-r-4 border-l-2 border-[#3b3b3b] border-r-[#484848]">
          <div className="flex h-[12px] shrink-0 justify-end bg-[#424242] pr-[5px]">
            <svg width="8" height="9" viewBox="0 0 8 9" fill="#c8c8c8" aria-hidden="true"><path d="M0 3v5l3.500-2.500zM4 3v5l3.500-2.500z" /></svg>
          </div>
          <TransformPanel />
          <AppearancePanel />
          <ColorPanel />
          <LayersPanel />
        </aside>
      </div>
      <Taskbar />
    </div>
  );
}
